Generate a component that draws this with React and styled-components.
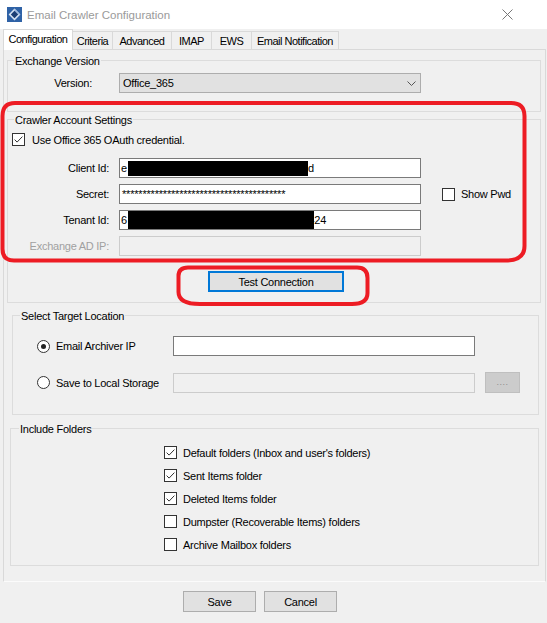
import React from "react";
import styled, { createGlobalStyle } from "styled-components";

const Global = createGlobalStyle`
  html, body { margin: 0; padding: 0; background: #f0f0f0; }
  body {
    font-family: "Liberation Sans", Arial, sans-serif;
    font-size: 11px;
    letter-spacing: -0.25px;
    color: #000;
  }
  * { box-sizing: border-box; }
`;

const Window = styled.div`
  position: relative;
  width: 547px;
  height: 623px;
  display: flex;
  flex-direction: column;
  background: #f0f0f0;
  overflow: hidden;
`;

const TitleBar = styled.div`
  flex: none;
  height: 29px;
  background: #fff;
  display: flex;
  align-items: center;
  padding-left: 7px;
`;

const TitleText = styled.span`
  margin-left: 5px;
  font-size: 11.5px;
  letter-spacing: 0;
  color: #9a9a9a;
`;

const CloseGlyph = styled.svg`
  margin-left: auto;
  margin-right: 34px;
`;

const Body = styled.div`
  flex: 1;
  display: flex;
  flex-direction: column;
  padding: 0 1px 0 3px;
`;

const TabStrip = styled.div`
  flex: none;
  height: 20px;
  display: flex;
  align-items: flex-start;
`;

const Tab = styled.div`
  flex: none;
  position: relative;
  z-index: ${(p) => (p.$active ? 2 : 1)};
  width: ${(p) => p.$w}px;
  height: ${(p) => (p.$active ? 21 : 18)}px;
  margin-top: ${(p) => (p.$active ? 0 : 2)}px;
  margin-left: ${(p) => (p.$first ? 0 : -1)}px;
  border: 1px solid #d9d9d9;
  border-bottom: none;
  background: ${(p) => (p.$active ? "#ffffff" : "#f0f0f0")};
  display: flex;
  align-items: center;
  justify-content: center;
  padding-bottom: ${(p) => (p.$active ? 2 : 0)}px;
  font-size: 11px;
  letter-spacing: -0.5px;
  white-space: nowrap;
`;

const TabPanel = styled.div`
  flex: none;
  position: relative;
  z-index: 1;
  height: 533px;
  border: 1px solid #d9d9d9;
  border-bottom-color: #fbfbfb;
  display: flex;
  flex-direction: column;
`;

const Group = styled.div`
  flex: none;
  position: relative;
  height: ${(p) => p.$h}px;
  margin: ${(p) => p.$top}px ${(p) => p.$right}px 0 ${(p) => p.$left}px;
  padding: ${(p) => p.$pt}px 0 0 ${(p) => p.$pl}px;
  border: 1px solid #dcdcdc;
  display: flex;
  flex-direction: column;
`;

const Legend = styled.span`
  position: absolute;
  top: -6px;
  left: ${(p) => p.$left}px;
  padding: 0 1px;
  line-height: 13px;
  background: #f0f0f0;
  white-space: nowrap;
`;

const Row = styled.div`
  display: flex;
  align-items: center;
  height: ${(p) => p.$h ?? 20}px;
  margin-top: ${(p) => p.$mt ?? 0}px;
`;

const Label = styled.span`
  flex: none;
  width: ${(p) => p.$w}px;
  margin-right: ${(p) => p.$gap}px;
  text-align: right;
  white-space: nowrap;
  color: ${(p) => (p.$disabled ? "#a0a0a0" : "#000")};
`;

const Field = styled.div`
  flex: none;
  display: flex;
  align-items: center;
  width: ${(p) => p.$w ?? 302}px;
  height: 20px;
  padding-left: 1px;
  background: ${(p) => (p.$disabled ? "#f0f0f0" : "#fff")};
  border: 1px solid ${(p) => (p.$disabled ? "#cccccc" : "#7a7a7a")};
  white-space: nowrap;
  overflow: hidden;
`;

const Redaction = styled.span`
  display: inline-block;
  flex: none;
  width: ${(p) => p.$w}px;
  height: ${(p) => p.$h}px;
  margin-left: 1px;
  margin-right: ${(p) => p.$mr ?? 0}px;
  background: #000;
`;

const Dots = styled.span`
  letter-spacing: -0.2px;
  margin-left: 1px;
  margin-top: -1px;
`;

const Select = styled.div`
  flex: none;
  display: flex;
  align-items: center;
  justify-content: space-between;
  width: 302px;
  height: 20px;
  padding: 0 4px 0 3px;
  background: #e1e1e1;
  border: 1px solid #adadad;
`;

const FieldList = styled.div`
  display: flex;
  flex-direction: column;
  gap: 6px;
  margin-top: 12px;
`;

const Check = styled.span`
  flex: none;
  width: 13px;
  height: 13px;
  border: 1px solid #333;
  background: #fff;
  display: inline-flex;
  align-items: center;
  justify-content: center;
`;

const CheckRow = styled.label`
  display: flex;
  align-items: center;
  gap: ${(p) => p.$gap ?? 6}px;
  height: ${(p) => p.$h ?? 13}px;
  margin-left: ${(p) => p.$ml ?? 0}px;
  white-space: nowrap;
`;

const Radio = styled.span`
  flex: none;
  width: 13px;
  height: 13px;
  border: 1px solid #333;
  border-radius: 50%;
  background: #fff;
  display: inline-flex;
  align-items: center;
  justify-content: center;
  &::after {
    content: "";
    display: ${(p) => (p.$on ? "block" : "none")};
    width: 5px;
    height: 5px;
    border-radius: 50%;
    background: #222;
  }
`;

const RadioLabel = styled.span`
  flex: none;
  display: flex;
  align-items: center;
  gap: 6px;
  width: 136px;
  white-space: nowrap;
`;

const Button = styled.button`
  flex: none;
  width: ${(p) => p.$w}px;
  height: 21px;
  margin-left: ${(p) => p.$ml ?? 0}px;
  padding: 0;
  font: inherit;
  letter-spacing: -0.25px;
  color: #000;
  background: #e1e1e1;
  border: ${(p) => (p.$focus ? "2px solid #0078d7" : "1px solid #adadad")};
`;

const BrowseButton = styled.div`
  flex: none;
  width: 35px;
  height: 21px;
  margin-left: 10px;
  display: flex;
  align-items: flex-end;
  justify-content: center;
  padding-bottom: 5px;
  background: #cccccc;
  border: 1px solid #bfbfbf;
  color: #8d8d8d;
  font-size: 9px;
  letter-spacing: 0.5px;
  line-height: 9px;
`;

const FolderList = styled.div`
  display: flex;
  flex-direction: column;
`;

const Footer = styled.div`
  flex: none;
  display: flex;
  gap: 8px;
  padding: 9px 0 0 180px;
`;

const Annotation = styled.svg`
  position: absolute;
  left: 0;
  top: 0;
  pointer-events: none;
  z-index: 5;
`;

const AppIcon = () => (
  <svg width="15" height="15" viewBox="0 0 15 15">
    <rect width="15" height="15" fill="#2f62a6" />
    <path d="M7.5 1.6 L13.4 7.5 L7.5 13.4 L1.6 7.5 Z" fill="#d7e3f3" />
    <path d="M7.5 1.6 L13.4 7.5 L7.5 7.5 Z" fill="#9fb9de" />
    <path d="M7.5 3.8 L11.2 7.5 L7.5 11.2 L3.8 7.5 Z" fill="#1c3f75" />
  </svg>
);

const Tick = () => (
  <svg width="11" height="11" viewBox="0 0 11 11">
    <path d="M1.6 5.6 L4.1 8.1 L9.4 2.6" fill="none" stroke="#333" strokeWidth="1" />
  </svg>
);

const CheckBox = ({ checked }) => <Check>{checked && <Tick />}</Check>;

const tabs = [
  ["Configuration", 70],
  ["Criteria", 41],
  ["Advanced", 60],
  ["IMAP", 41],
  ["EWS", 41],
  ["Email Notification", 88],
];

const folders = [
  ["Default folders (Inbox and user's folders)", true],
  ["Sent Items folder", true],
  ["Deleted Items folder", true],
  ["Dumpster (Recoverable Items) folders", false],
  ["Archive Mailbox folders", false],
];

export default function App() {
  return (
    <>
      <Global />
      <Window>
        <TitleBar>
          <AppIcon />
          <TitleText>Email Crawler Configuration</TitleText>
          <CloseGlyph width="11" height="11" viewBox="0 0 11 11">
            <path d="M0.5 0.5 L10.5 10.5 M10.5 0.5 L0.5 10.5" stroke="#777" strokeWidth="1" />
          </CloseGlyph>
        </TitleBar>

        <Body>
          <TabStrip>
            {tabs.map(([name, w], i) => (
              <Tab key={name} $w={w} $active={i === 0} $first={i === 0}>
                {name}
              </Tab>
            ))}
          </TabStrip>

          <TabPanel>
            <Group $top={10} $left={3} $right={4} $h={52} $pt={12} $pl={0}>
              <Legend $left={6}>Exchange Version</Legend>
              <Row>
                <Label $w={84} $gap={27}>Version:</Label>
                <Select>
                  <span>Office_365</span>
                  <svg width="9" height="5" viewBox="0 0 9 5">
                    <path d="M0.5 0.5 L4.5 4.5 L8.5 0.5" fill="none" stroke="#555" strokeWidth="1" />
                  </svg>
                </Select>
              </Row>
            </Group>

            <Group $top={7} $left={3} $right={4} $h={184} $pt={13} $pl={4}>
              <Legend $left={6}>Crawler Account Settings</Legend>
              <CheckRow $gap={7}>
                <CheckBox checked />
                Use Office 365 OAuth credential.
              </CheckRow>
              <FieldList>
                <Row>
                  <Label $w={97} $gap={10}>Client Id:</Label>
                  <Field>
                    e<Redaction $w={180} $h={15} />d
                  </Field>
                </Row>
                <Row>
                  <Label $w={97} $gap={10}>Secret:</Label>
                  <Field>
                    <Dots>{"*".repeat(40)}</Dots>
                  </Field>
                  <CheckRow $ml={21}>
                    <CheckBox />
                    Show Pwd
                  </CheckRow>
                </Row>
                <Row>
                  <Label $w={97} $gap={10}>Tenant Id:</Label>
                  <Field>
                    6<Redaction $w={186} $h={18} $mr={-3} />-24
                  </Field>
                </Row>
                <Row>
                  <Label $w={97} $gap={10} $disabled>Exchange AD IP:</Label>
                  <Field $disabled />
                </Row>
              </FieldList>
              <Row $h={21} $mt={15}>
                <Button $w={136} $ml={196} $focus>Test Connection</Button>
              </Row>
            </Group>

            <Group $top={12} $left={8} $right={6} $h={100} $pt={20} $pl={24}>
              <Legend $left={7}>Select Target Location</Legend>
              <Row>
                <RadioLabel>
                  <Radio $on />
                  Email Archiver IP
                </RadioLabel>
                <Field />
              </Row>
              <Row $h={21} $mt={16}>
                <RadioLabel>
                  <Radio />
                  Save to Local Storage
                </RadioLabel>
                <Field $disabled />
                <BrowseButton>....</BrowseButton>
              </Row>
            </Group>

            <Group $top={13} $left={6} $right={6} $h={138} $pt={12} $pl={153}>
              <Legend $left={8}>Include Folders</Legend>
              <FolderList>
                {folders.map(([name, on]) => (
                  <CheckRow key={name} $h={23}>
                    <CheckBox checked={on} />
                    {name}
                  </CheckRow>
                ))}
              </FolderList>
            </Group>
          </TabPanel>

          <Footer>
            <Button $w={73}>Save</Button>
            <Button $w={73}>Cancel</Button>
          </Footer>
        </Body>

        <Annotation width="547" height="623" viewBox="0 0 547 623">
          <g fill="none" stroke="#ed1c24" strokeWidth="4" strokeLinejoin="round">
            <path d="M15 103 L511 103 Q524.5 103 524.5 116 L524.5 246 Q524.5 260.5 506 260.5 L14 260.5 Q2.5 260.5 2.5 249 L2.5 116 Q2.5 103 15 103 Z" />
            <path d="M188 267.5 L357 267.5 Q367.5 267.5 367.5 278 L367.5 293 Q367.5 304 352 304 L200 304 Q178.5 304 178.5 292 L178.5 276 Q178.5 267.5 188 267.5 Z" />
          </g>
        </Annotation>
      </Window>
    </>
  );
}
